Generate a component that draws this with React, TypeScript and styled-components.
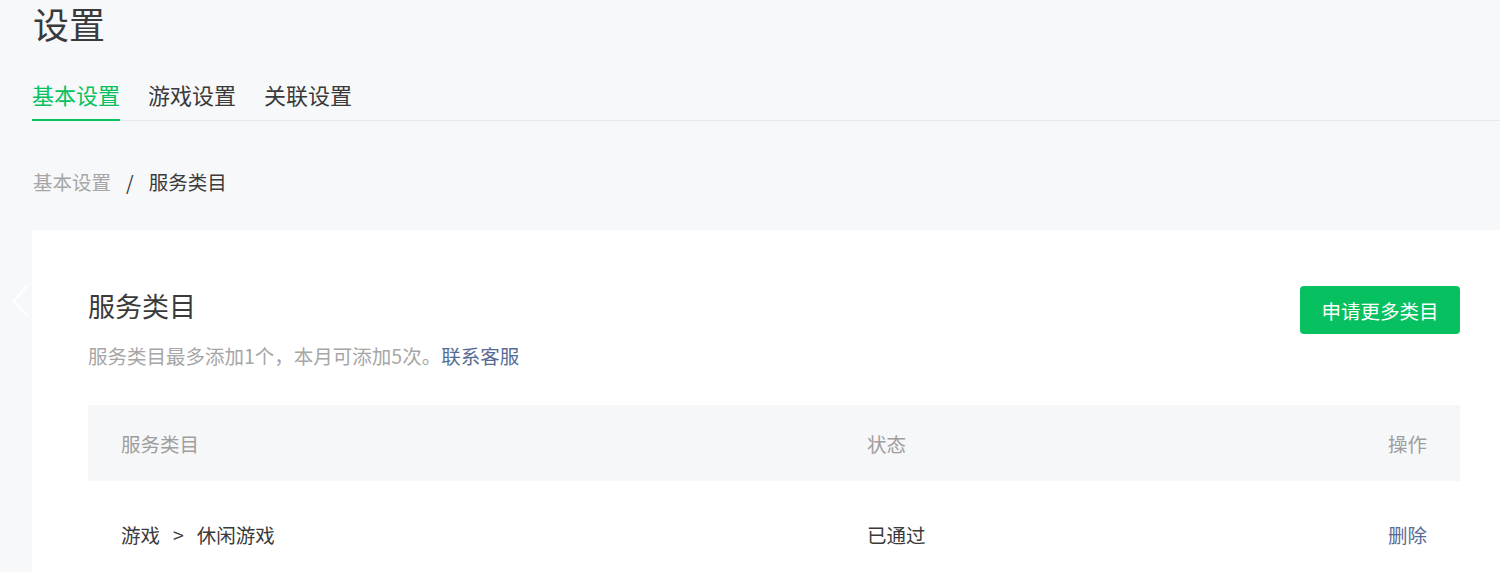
import React from "react";
import styled, { createGlobalStyle } from "styled-components";

const GlobalStyle = createGlobalStyle`
  html, body { margin: 0; padding: 0; background: #f7f8fa; overflow: hidden; }
  body { font-family: "Noto Sans CJK SC", "Noto Sans", sans-serif; color: #3a3a3a; }
  * { box-sizing: border-box; }
`;

const Page = styled.div`
  position: relative;
  width: 1500px;
  height: 572px;
  overflow: hidden;
  padding-left: 32px;
`;

const Inner = styled.div`
  width: 1484px;
`;

const PageTitle = styled.h1`
  margin: 0;
  padding-top: 2px;
  font-size: 36px;
  font-weight: 400;
  line-height: 42px;
  color: #3a3a3a;
  padding-left: 1px;
`;

const TabBar = styled.div`
  display: flex;
  gap: 28px;
  margin-top: 35px;
  border-bottom: 1px solid #e7e8ea;
`;

const Tab = styled.div<{ $active?: boolean }>`
  font-size: 22px;
  line-height: 30px;
  padding-bottom: 10px;
  margin-bottom: -1px;
  color: ${(p) => (p.$active ? "#07c160" : "#3a3a3a")};
  border-bottom: 2px solid ${(p) => (p.$active ? "#07c160" : "transparent")};
`;

const Breadcrumb = styled.div`
  display: flex;
  align-items: center;
  gap: 15px;
  margin-top: 47px;
  font-size: 19.5px;
  line-height: 28px;
  padding-left: 1px;
`;

const Crumb = styled.span<{ $current?: boolean }>`
  color: ${(p) => (p.$current ? "#3a3a3a" : "#a6a6a6")};
`;

const Card = styled.div`
  margin-top: 34px;
  background: #fff;
  border-radius: 4px;
  padding: 56px 56px 40px;
  min-height: 400px;
`;

const CardHeader = styled.div`
  display: flex;
  justify-content: space-between;
  align-items: flex-start;
`;

const CardTitle = styled.h2`
  margin: 0;
  font-size: 27px;
  font-weight: 400;
  line-height: 40px;
  color: #3a3a3a;
`;

const CardDesc = styled.p`
  margin: 16px 0 0;
  font-size: 19.5px;
  line-height: 28px;
  color: #a6a6a6;
`;

const Link = styled.a`
  color: #576b95;
  text-decoration: none;
  cursor: pointer;
`;

const PrimaryButton = styled.button`
  width: 160px;
  height: 48px;
  border: none;
  border-radius: 4px;
  background: #07c160;
  color: #fff;
  font-family: inherit;
  font-size: 19.5px;
  cursor: pointer;
`;

const Table = styled.div`
  margin-top: 35px;
`;

const Row = styled.div<{ $head?: boolean }>`
  display: grid;
  grid-template-columns: 746px 1fr auto;
  align-items: center;
  height: ${(p) => (p.$head ? "76px" : "106px")};
  padding: 0 33px;
  background: ${(p) => (p.$head ? "#f6f7f9" : "#fff")};
  font-size: 19.5px;
  color: ${(p) => (p.$head ? "#9e9e9e" : "#3a3a3a")};
`;

const Path = styled.span`
  display: flex;
  gap: 13px;
`;

const Cell = styled.span<{ $right?: boolean }>`
  text-align: ${(p) => (p.$right ? "right" : "left")};
`;

const PrevArrow = styled.div`
  position: absolute;
  left: 10px;
  top: 284px;
  width: 24px;
  height: 34px;
`;

export default function App() {
  return (
    <>
      <GlobalStyle />
      <Page>
        <Inner>
          <PageTitle>设置</PageTitle>
          <TabBar>
            <Tab $active>基本设置</Tab>
            <Tab>游戏设置</Tab>
            <Tab>关联设置</Tab>
          </TabBar>
          <Breadcrumb>
            <Crumb>基本设置</Crumb>
            <Crumb $current>/</Crumb>
            <Crumb $current>服务类目</Crumb>
          </Breadcrumb>
          <Card>
            <CardHeader>
              <div>
                <CardTitle>服务类目</CardTitle>
                <CardDesc>
                  服务类目最多添加1个，本月可添加5次。<Link>联系客服</Link>
                </CardDesc>
              </div>
              <PrimaryButton>申请更多类目</PrimaryButton>
            </CardHeader>
            <Table>
              <Row $head>
                <Cell>服务类目</Cell>
                <Cell>状态</Cell>
                <Cell $right>操作</Cell>
              </Row>
              <Row>
                <Path>
                  <span>游戏</span>
                  <span>&gt;</span>
                  <span>休闲游戏</span>
                </Path>
                <Cell>已通过</Cell>
                <Cell $right>
                  <Link>删除</Link>
                </Cell>
              </Row>
            </Table>
          </Card>
        </Inner>
        <PrevArrow>
          <svg width="24" height="34" viewBox="0 0 24 34" fill="none">
            <path d="M17 2 L4 17 L17 32" stroke="#ffffff" strokeWidth="2" strokeLinecap="round" strokeLinejoin="round" />
          </svg>
        </PrevArrow>
      </Page>
    </>
  );
}
